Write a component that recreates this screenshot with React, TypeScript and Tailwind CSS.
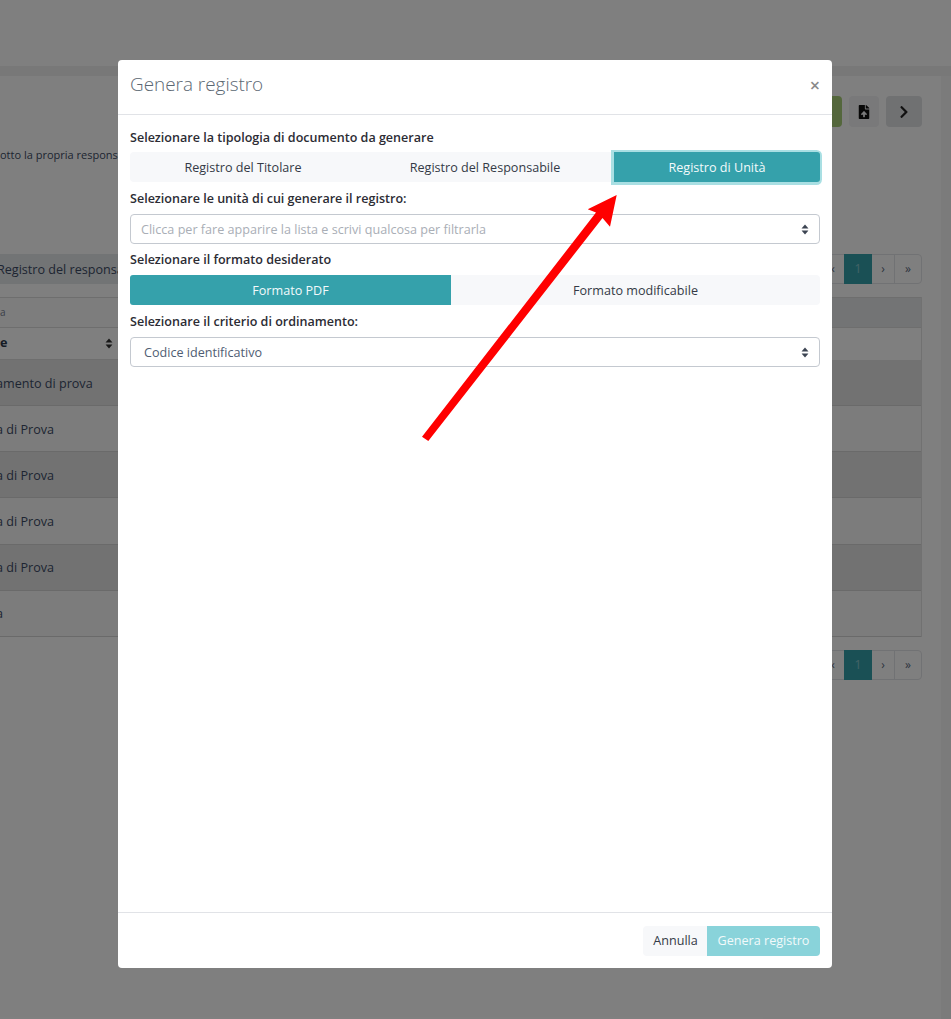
import { FaFileUpload, FaChevronRight } from "react-icons/fa";

const FONT = "[font-family:'Open_Sans',sans-serif]";

function SortIcon({ className }: { className: string }) {
  return (
    <svg viewBox="0 0 8 12" className={className} fill="currentColor">
      <path d="M4 0.5 L7.6 4.6 Q7.8 5 7.3 5 L0.7 5 Q0.2 5 0.4 4.6 Z" />
      <path d="M4 11.5 L7.6 7.4 Q7.8 7 7.3 7 L0.7 7 Q0.2 7 0.4 7.4 Z" />
    </svg>
  );
}

function Pager() {
  return (
    <div className="flex justify-end text-[12px] text-[#5b6a80]">
      <div className="flex h-[30px] rounded border border-[#e2e4e8]">
        <span className="flex w-[22px] items-center justify-center">‹</span>
        <span className="-my-px flex h-[30px] w-[28px] items-center justify-center bg-[#35a1ab] text-[13px] text-[#fff]/40">1</span>
        <span className="flex w-[23px] items-center justify-center border-r border-[#e2e4e8]">›</span>
        <span className="flex w-[26px] items-center justify-center">»</span>
      </div>
    </div>
  );
}

const rows = [
  { label: "amento di prova", dark: true, h: "h-[46px] pt-[4px]" },
  { label: "a di Prova", dark: false, h: "h-[46px] pt-[4px]" },
  { label: "a di Prova", dark: true, h: "h-[46px] pt-[4px]" },
  { label: "a di Prova", dark: false, h: "h-[47px] pt-[2px]" },
  { label: "a di Prova", dark: true, h: "h-[46px] pt-[2px]" },
  { label: "a", dark: false, h: "h-[46px] pt-[2px]" },
];

function Background() {
  return (
    <div className="h-[1019px] overflow-hidden bg-[#f6f6f6]">
      <div className="h-[66px] bg-white" />
      <div className="h-[10px] bg-[#f0f0f0]" />
      <div className="mr-[10px] h-[943px] bg-white pr-[19px]">
        <div className="flex justify-end gap-[7px] pt-[20px]">
          <div className="h-[31px] w-[60px] rounded bg-[#a9cf78]" />
          <div className="flex h-[31px] w-[30px] items-center justify-center rounded bg-[#f3f3f4] text-[14px] text-[#111]">
            <FaFileUpload />
          </div>
          <div className="flex h-[31px] w-[36px] items-center justify-center rounded bg-[#e0e2e5] text-[14px] text-[#222]">
            <FaChevronRight />
          </div>
        </div>
        <div className="mt-[20px] h-[16px] whitespace-nowrap text-[11px] leading-[16px] text-[#3c4b64]">otto la propria respons</div>
        <div className="mt-[91px] flex items-center justify-between">
          <div className="flex h-[30px] w-[118px] items-center overflow-hidden whitespace-nowrap bg-[#e5e8eb] pt-[2px] text-[12.6px] text-[#3c4b64]">
            <span className="-ml-[3px]">Registro del responsabile</span>
          </div>
          <Pager />
        </div>
        <div className="mt-[13px] border-r border-[#e2e2e2]">
          <div className="flex h-[31px] border-t border-b border-[#dcdcdc] text-[10px] leading-[29px] text-[#768192]">
            <span className="w-[118px] bg-[#fbfbfb]">a</span>
            <span className="flex-1 bg-[#e6e8ea]" />
          </div>
          <div className="flex h-[32px] w-[118px] items-center justify-between border-b border-[#dcdcdc] pr-[5px] text-[12.6px] font-bold text-[#2c384a]">
            <span>e</span>
            <SortIcon className="h-[11px] w-[8px] text-[#333]" />
          </div>
          {rows.map((r, i) => (
            <div
              key={i}
              className={`flex items-center border-b border-[#d4d4d4] text-[12.6px] text-[#3c4b64] ${r.h} ${r.dark ? "bg-[#e4e4e4]" : "bg-[#f8f8f8]"}`}
            >
              <span className="-ml-[4px]">{r.label}</span>
            </div>
          ))}
        </div>
        <div className="mt-[13px]">
          <Pager />
        </div>
      </div>
    </div>
  );
}

function Label({ children }: { children: string }) {
  return <div className="h-[20px] text-[12.55px] font-semibold leading-[21px] text-[#2c2c34]">{children}</div>;
}

function SelectBox({ text, placeholder }: { text: string; placeholder?: boolean }) {
  return (
    <div className="flex h-[30px] items-center justify-between rounded border border-[#c4c9d0] bg-white pr-[10px] text-[12.6px]">
      <span className={placeholder ? "pl-[10px] pt-[2px] text-[#a9aeb6]" : "pl-[13px] pt-[2px] text-[#4f5d73]"}>{text}</span>
      <SortIcon className="h-[11px] w-[8px] text-[#3c4452]" />
    </div>
  );
}

function Arrow() {
  return (
    <svg className="pointer-events-none absolute left-[300px] top-[130px]" width="330" height="320" viewBox="300 130 330 320">
      <polygon fill="#ff0000" points="616.7,195 610,226.7 602.5,218 428.3,441 422,436.7 596,212.5 587.7,209.3" />
    </svg>
  );
}

export default function App() {
  return (
    <div className={`relative h-[1019px] w-[951px] overflow-hidden ${FONT}`}>
      <Background />
      <div className="absolute inset-0 bg-black/50" />

      <div className="absolute left-[118px] top-[60px] flex h-[908px] w-[714px] flex-col rounded-[4px] bg-white">
        <div className="flex h-[55px] shrink-0 items-center justify-between border-b border-[#e1e3e7] pb-[5px] pl-[12px] pr-[12px]">
          <h5 className="text-[18.9px] font-light text-[#5c6873]">Genera registro</h5>
          <span className="text-[18px] font-semibold leading-none text-[#8a8a8a]">×</span>
        </div>

        <div className="flex-1 px-[12px] pt-[12px]">
          <Label>Selezionare la tipologia di documento da generare</Label>
          <div className="mt-[5px] flex h-[30px] rounded bg-[#f7f8fa] pt-0 text-[12.6px] text-[#343a46]">
            <div className="flex w-[226px] items-center justify-center pt-[2px]">Registro del Titolare</div>
            <div className="flex w-[258px] items-center justify-center pt-[2px]">Registro del Responsabile</div>
            <div className="flex w-[206px] items-center justify-center rounded-r-[3px] bg-[#35a1ab] pt-[2px] text-[#f2fafb] shadow-[-0.5px_0.5px_0_2.5px_#a9dfe3]">
              Registro di Unità
            </div>
          </div>
          <div className="mt-[6px]">
            <Label>Selezionare le unità di cui generare il registro:</Label>
          </div>
          <div className="mt-[6px]">
            <SelectBox text="Clicca per fare apparire la lista e scrivi qualcosa per filtrarla" placeholder />
          </div>
          <div className="mt-[5px]">
            <Label>Selezionare il formato desiderato</Label>
          </div>
          <div className="mt-[6px] flex h-[30px] rounded bg-[#f7f8fa] text-[12.6px] text-[#343a46]">
            <div className="flex w-[321px] items-center justify-center rounded-l-[3px] bg-[#35a1ab] pt-[2px] text-[#f2fafb]">Formato PDF</div>
            <div className="flex flex-1 items-center justify-center pt-[2px]">Formato modificabile</div>
          </div>
          <div className="mt-[6px]">
            <Label>Selezionare il criterio di ordinamento:</Label>
          </div>
          <div className="mt-[6px]">
            <SelectBox text="Codice identificativo" />
          </div>
        </div>

        <div className="flex h-[56px] shrink-0 items-center justify-end border-t border-[#e1e3e7] px-[12px] pt-[1px]">
          <div className="flex h-[30px] w-[64px] items-center justify-center rounded-l bg-[#f7f8fa] pl-[1px] text-[12.6px] text-[#343a46]">Annulla</div>
          <div className="flex h-[30px] w-[113px] items-center justify-center rounded-r bg-[#89d3da] text-[12.6px] text-[#f2fafb]">Genera registro</div>
        </div>
      </div>

      <Arrow />
    </div>
  );
}
